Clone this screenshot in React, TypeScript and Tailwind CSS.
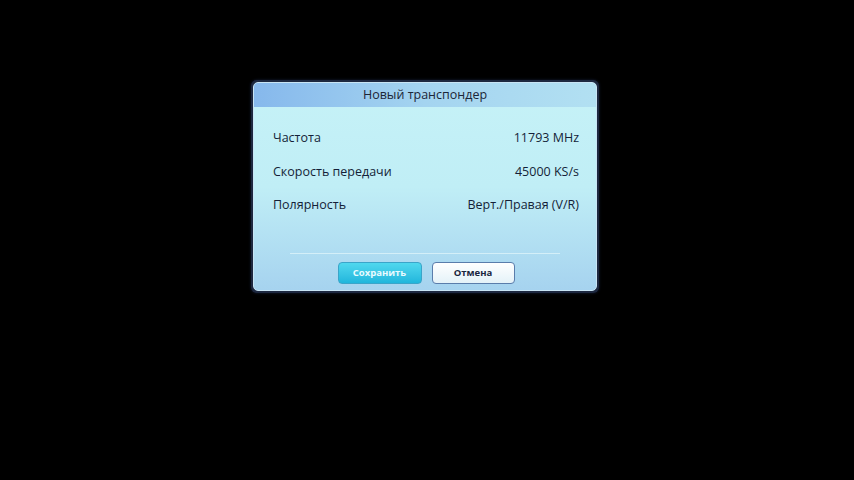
export default function App() {
  const rows = [
    { label: "Частота", value: "11793 MHz" },
    { label: "Скорость передачи", value: "45000 KS/s" },
    { label: "Полярность", value: "Верт./Правая (V/R)" },
  ];

  return (
    <div className="w-[854px] h-[480px] bg-black flex justify-center pt-[80px] pr-[4px] font-['Open_Sans','Noto_Sans',sans-serif]">
      <div className="w-[348px] h-[213px] rounded-[6px] bg-[#1d2840] p-[2px] shadow-[0_0_3px_rgba(40,60,110,0.5)]">
        <div className="h-full w-full rounded-[5px] border border-[#c8e4f4] overflow-hidden flex flex-col bg-gradient-to-b from-[#c6f2f7] via-[#c0eef6] to-[#a6d3ef]">
          {/* title */}
          <div className="h-[24px] flex items-center justify-center bg-gradient-to-r from-[#86b8ec] via-[#a4d4f0] to-[#b2e0f2] text-[12.5px] text-[#1c2638]">
            Новый транспондер
          </div>

          {/* rows */}
          <div className="flex flex-col pl-[19px] pr-[17px] pt-[21px] gap-[12.5px] text-[12.5px] font-medium text-[#141f38]">
            {rows.map(r => (
              <div key={r.label} className="flex justify-between items-center h-[21px]">
                <span>{r.label}</span>
                <span>{r.value}</span>
              </div>
            ))}
          </div>

          <div className="flex-1" />
          <div className="mx-[36px] h-px bg-[#e4f6fb]/70" />

          {/* buttons */}
          <div className="flex justify-center gap-[10px] pt-[8px] pb-[6px] pl-[2px]">
            <div className="w-[84px] h-[22px] rounded-[4px] border border-[#3aa5c9] bg-gradient-to-b from-[#4fd8ee] to-[#1fb6dc] flex items-center justify-center text-[9.5px] font-bold text-[#e8fbff]">
              Сохранить
            </div>
            <div className="w-[83px] h-[22px] rounded-[4px] border-[1.5px] border-[#5a7dab] bg-gradient-to-b from-[#ffffff] to-[#e4f2f8] flex items-center justify-center text-[9.5px] font-bold text-[#1a2640]">
              Отмена
            </div>
          </div>
        </div>
      </div>
    </div>
  );
}
